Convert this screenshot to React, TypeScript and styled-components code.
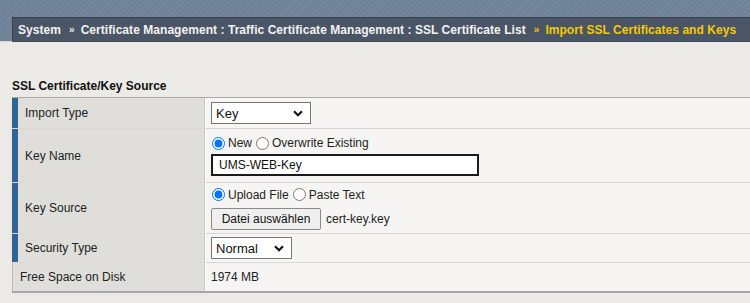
import React from "react";
import styled, { createGlobalStyle } from "styled-components";

const Global = createGlobalStyle`
  html, body { margin: 0; padding: 0; background: #ebeae6; }
  body { font-family: "Liberation Sans", Arial, sans-serif; font-size: 12px; color: #222; width: 750px; height: 303px; overflow: hidden; }
`;

const TopBand = styled.div`
  height: 42px;
  padding-top: 17px;
  padding-left: 12px;
  box-sizing: border-box;
  background: repeating-linear-gradient(135deg, #6f8196 0px, #6f8196 2px, #75879b 2px, #75879b 4px);
  border-bottom: 1px solid #d6d5d1;
`;

const Crumbs = styled.div`
  height: 25px;
  box-sizing: border-box;
  background: #4a5566;
  border-top: 1px solid #38414e;
  border-left: 1px solid #38414e;
  border-bottom: 1px solid #3d4653;
  display: flex;
  align-items: center;
  padding-left: 5px;
  font-weight: bold;
  font-size: 12px;
  letter-spacing: 0.05px;
  white-space: nowrap;
  color: #f2f2f2;
`;

const Sep = styled.span<{ $gold?: boolean }>`
  font-size: 10px;
  margin: 0 6px 0 8px;
  color: ${(p) => (p.$gold ? "#f5c400" : "#e6e6e6")};
`;

const Current = styled.span`
  color: #f7c900;
`;

const Content = styled.div`
  padding: 36px 0 0 12px;
`;

const SectionTitle = styled.div`
  font-weight: bold;
  font-size: 12px;
  color: #111;
  height: 16px;
  line-height: 16px;
  margin-bottom: 3px;
`;

const Table = styled.div`
  border-top: 1px solid #a9a9a7;
  border-bottom: 2px solid #a6a6a4;
  background: #f6f5f3;
`;

const Row = styled.div<{ $h: number }>`
  display: grid;
  grid-template-columns: 193px 1fr;
  height: ${(p) => p.$h}px;
  border-top: 1px solid #d9d8d5;
  &:first-child { border-top: none; }
`;

const Label = styled.div<{ $stripe?: boolean }>`
  background: #dfdedb;
  border-left: ${(p) => (p.$stripe ? "6px solid #2f6597" : "1px solid #b8b8b6")};
  border-right: 1px solid #c7c6c3;
  padding-left: 7px;
  display: flex;
  align-items: center;
  color: #222;
  font-size: 12px;
`;

const Value = styled.div<{ $gap?: number }>`
  border-left: 1px solid #ffffff;
  padding-left: 5px;
  display: flex;
  flex-direction: column;
  justify-content: center;
  gap: ${(p) => p.$gap ?? 4}px;
  color: #1e1e1e;
`;

const Line = styled.div`
  display: flex;
  align-items: center;
  height: 16px;
`;

const SelectBox = styled.div<{ $w: number }>`
  width: ${(p) => p.$w}px;
  height: 22px;
  box-sizing: border-box;
  border: 1px solid #767676;
  background: #fff;
  display: flex;
  align-items: center;
  justify-content: space-between;
  padding: 0 7px 0 4px;
  font-size: 13px;
  color: #111;
`;

const Radio = styled.input`
  margin: 0 3px 0 4px;
  width: 13px;
  height: 13px;
  accent-color: #0075ff;
  &:first-child { margin-left: 1px; }
`;

const TextInput = styled.input`
  width: 268px;
  height: 22px;
  box-sizing: border-box;
  border: 2px solid #1b1b1b;
  background: #fff;
  padding: 0 6px;
  font-family: "Liberation Sans", Arial, sans-serif;
  font-size: 12px;
  color: #111;
  outline: none;
`;

const FileLine = styled.div`
  display: flex;
  align-items: center;
  gap: 5px;
`;

const FileButton = styled.button`
  height: 22px;
  width: 110px;
  box-sizing: border-box;
  border: 1px solid #8a8a8a;
  border-radius: 2px;
  background: #efefef;
  font-family: "Liberation Sans", Arial, sans-serif;
  font-size: 12px;
  color: #111;
  padding: 0;
`;

const Chevron = () => (
  <svg width="10" height="7" viewBox="0 0 10 7">
    <path d="M1 1.2 L5 5.2 L9 1.2" fill="none" stroke="#111" strokeWidth="2.2" />
  </svg>
);

export default function App() {
  return (
    <>
      <Global />
      <TopBand>
        <Crumbs>
          System<Sep>»</Sep>Certificate Management : Traffic Certificate Management : SSL Certificate List
          <Sep $gold>»</Sep>
          <Current>Import SSL Certificates and Keys</Current>
        </Crumbs>
      </TopBand>
      <Content>
        <SectionTitle>SSL Certificate/Key Source</SectionTitle>
        <Table>
          <Row $h={30}>
            <Label $stripe>Import Type</Label>
            <Value>
              <SelectBox $w={100}>
                Key <Chevron />
              </SelectBox>
            </Value>
          </Row>
          <Row $h={53}>
            <Label $stripe>Key Name</Label>
            <Value $gap={3}>
              <Line>
                <Radio type="radio" name="kn" defaultChecked />
                New
                <Radio type="radio" name="kn" />
                Overwrite Existing
              </Line>
              <TextInput defaultValue="UMS-WEB-Key" />
            </Value>
          </Row>
          <Row $h={50}>
            <Label $stripe>Key Source</Label>
            <Value $gap={5}>
              <Line>
                <Radio type="radio" name="ks" defaultChecked />
                Upload File
                <Radio type="radio" name="ks" />
                Paste Text
              </Line>
              <FileLine>
                <FileButton>Datei auswählen</FileButton>
                cert-key.key
              </FileLine>
            </Value>
          </Row>
          <Row $h={28}>
            <Label $stripe>Security Type</Label>
            <Value>
              <SelectBox $w={81}>
                Normal <Chevron />
              </SelectBox>
            </Value>
          </Row>
          <Row $h={28}>
            <Label>Free Space on Disk</Label>
            <Value>1974 MB</Value>
          </Row>
        </Table>
      </Content>
    </>
  );
}
